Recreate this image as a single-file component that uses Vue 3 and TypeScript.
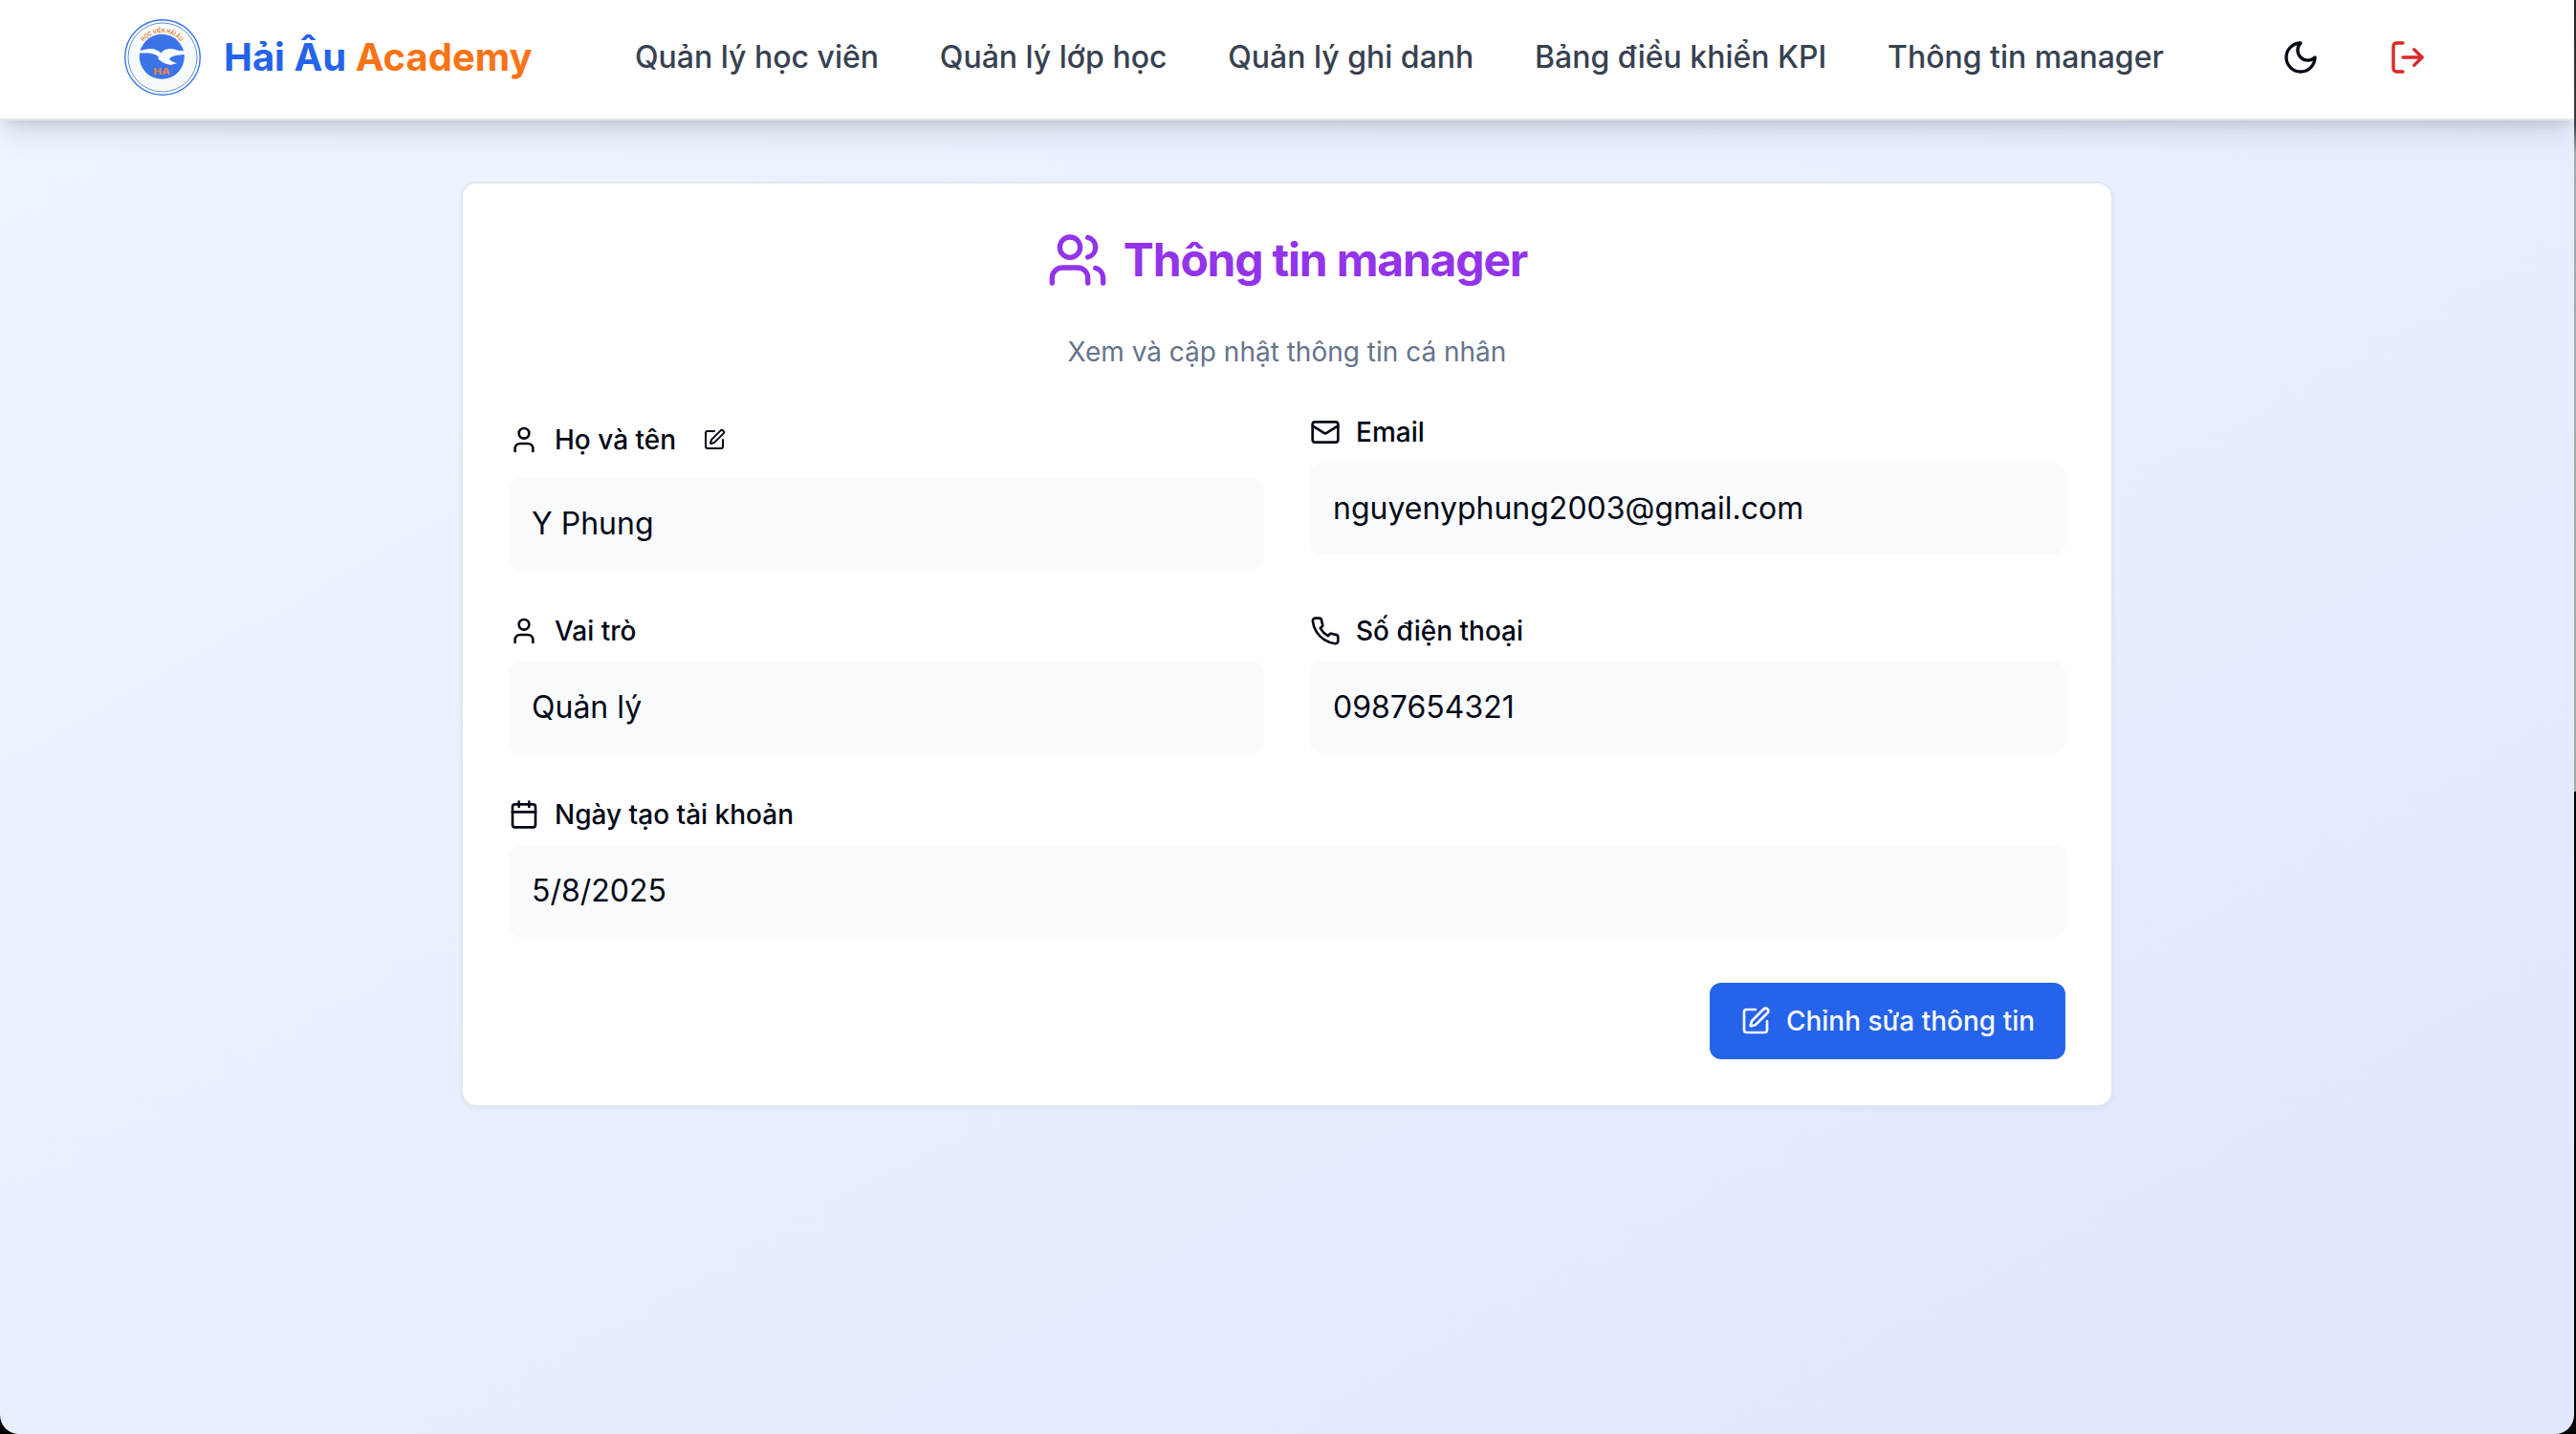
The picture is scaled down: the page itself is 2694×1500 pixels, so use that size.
<script setup lang="ts">
interface Shape { tag: string; [attr: string]: string | number }

const icons: Record<string, Shape[]> = {
  moon: [{ tag: 'path', d: 'M12 3a6 6 0 0 0 9 9 9 9 0 1 1-9-9Z' }],
  logout: [
    { tag: 'path', d: 'M9 21H5a2 2 0 0 1-2-2V5a2 2 0 0 1 2-2h4' },
    { tag: 'path', d: 'm16 17 5-5-5-5' },
    { tag: 'path', d: 'M21 12H9' },
  ],
  users: [
    { tag: 'path', d: 'M16 21v-2a4 4 0 0 0-4-4H6a4 4 0 0 0-4 4v2' },
    { tag: 'circle', cx: 9, cy: 7, r: 4 },
    { tag: 'path', d: 'M22 21v-2a4 4 0 0 0-3-3.87' },
    { tag: 'path', d: 'M16 3.13a4 4 0 0 1 0 7.75' },
  ],
  user: [
    { tag: 'path', d: 'M19 21v-2a4 4 0 0 0-4-4H9a4 4 0 0 0-4 4v2' },
    { tag: 'circle', cx: 12, cy: 7, r: 4 },
  ],
  mail: [
    { tag: 'rect', width: 20, height: 16, x: 2, y: 4, rx: 2 },
    { tag: 'path', d: 'm22 7-8.97 5.7a1.94 1.94 0 0 1-2.06 0L2 7' },
  ],
  phone: [
    { tag: 'path', d: 'M22 16.92v3a2 2 0 0 1-2.18 2 19.79 19.79 0 0 1-8.63-3.07 19.5 19.5 0 0 1-6-6 19.79 19.79 0 0 1-3.07-8.67A2 2 0 0 1 4.11 2h3a2 2 0 0 1 2 1.72 12.84 12.84 0 0 0 .7 2.81 2 2 0 0 1-.45 2.11L8.09 9.91a16 16 0 0 0 6 6l1.27-1.27a2 2 0 0 1 2.11-.45 12.84 12.84 0 0 0 2.81.7A2 2 0 0 1 22 16.92z' },
  ],
  calendar: [
    { tag: 'path', d: 'M8 2v4' },
    { tag: 'path', d: 'M16 2v4' },
    { tag: 'rect', width: 18, height: 18, x: 3, y: 4, rx: 2 },
    { tag: 'path', d: 'M3 10h18' },
  ],
  edit: [
    { tag: 'path', d: 'M12 3H5a2 2 0 0 0-2 2v14a2 2 0 0 0 2 2h14a2 2 0 0 0 2-2v-7' },
    { tag: 'path', d: 'M18.375 2.625a1 1 0 0 1 3 3l-9.013 9.014a2 2 0 0 1-.853.505l-2.873.84a.5.5 0 0 1-.62-.62l.84-2.873a2 2 0 0 1 .506-.852z' },
  ],
}

function attrs(shape: Shape) {
  const { tag, ...rest } = shape
  return rest
}

const navItems: string[] = [
  'Quản lý học viên',
  'Quản lý lớp học',
  'Quản lý ghi danh',
  'Bảng điều khiển KPI',
  'Thông tin manager',
]

interface Field { icon: string; label: string; value: string; editable?: boolean; wide?: boolean }

const fields: Field[] = [
  { icon: 'user', label: 'Họ và tên', value: 'Y Phung', editable: true },
  { icon: 'mail', label: 'Email', value: 'nguyenyphung2003@gmail.com' },
  { icon: 'user', label: 'Vai trò', value: 'Quản lý' },
  { icon: 'phone', label: 'Số điện thoại', value: '0987654321' },
  { icon: 'calendar', label: 'Ngày tạo tài khoản', value: '5/8/2025', wide: true },
]
</script>

<template>
  <div class="screen">
    <div class="page">
      <header class="topbar">
        <a class="brand">
          <svg class="logo" viewBox="0 0 80 80">
            <defs>
              <path id="logo-arc" d="M14.300 39.500A25.200 25.200 0 0 1 64.700 39.500" />
            </defs>
            <circle cx="40" cy="40" r="39.3" fill="#f6fafb" stroke="#3b78ea" stroke-width="1.4" />
            <circle cx="40" cy="40" r="36" fill="none" stroke="#5f86cc" stroke-width="0.9" />
            <circle cx="39.3" cy="39.3" r="23.5" fill="#3a74e8" />
            <text class="logo-ring"><textPath href="#logo-arc" startOffset="50%" text-anchor="middle" textLength="44" lengthAdjust="spacingAndGlyphs">HỌC VIỆN HẢI ÂU</textPath></text>
            <path fill="#f8fbff" d="M8 31.500C12 34.500 17 33 22 31.800C29 30 34 31.500 38.500 35.500C41 31.500 46 30.500 51 31.300C58 33 65 35.500 70 30C69 35.500 65 37 60 37.200C54 37.500 49.500 38.500 47 41.500C48.500 44 52 45.500 55.500 46L48.500 48C44 47.500 40 45.500 37 43C35.500 42 34.500 41 36 40C34 37 29 35.800 23 35.600C17 35.500 11 36 8 31.500Z" />
            <text class="logo-mark" x="39" y="58" text-anchor="middle" textLength="17.500" lengthAdjust="spacingAndGlyphs">HA</text>
          </svg>
          <span class="brand-name">Hải Âu <span class="brand-accent">Academy</span></span>
        </a>
        <nav class="nav">
          <a v-for="item in navItems" :key="item">{{ item }}</a>
        </nav>
        <div class="actions">
          <button class="icon-button" aria-label="Theme">
            <svg class="icon" viewBox="0 0 24 24"><component :is="s.tag" v-for="(s, i) in icons.moon" :key="i" v-bind="attrs(s)" /></svg>
          </button>
          <button class="icon-button danger" aria-label="Logout">
            <svg class="icon" viewBox="0 0 24 24"><component :is="s.tag" v-for="(s, i) in icons.logout" :key="i" v-bind="attrs(s)" /></svg>
          </button>
        </div>
      </header>

      <main class="card">
        <h1 class="title">
          <svg class="icon" viewBox="0 0 24 24"><component :is="s.tag" v-for="(s, i) in icons.users" :key="i" v-bind="attrs(s)" /></svg>
          <span>Thông tin manager</span>
        </h1>
        <p class="subtitle">Xem và cập nhật thông tin cá nhân</p>

        <section class="fields">
          <div v-for="field in fields" :key="field.label" class="field" :class="{ wide: field.wide }">
            <div class="label" :class="{ editable: field.editable }">
              <svg class="icon" viewBox="0 0 24 24"><component :is="s.tag" v-for="(s, i) in icons[field.icon]" :key="i" v-bind="attrs(s)" /></svg>
              <span>{{ field.label }}</span>
              <button v-if="field.editable" class="edit" aria-label="Edit">
                <svg class="icon" viewBox="0 0 24 24"><component :is="s.tag" v-for="(s, i) in icons.edit" :key="i" v-bind="attrs(s)" /></svg>
              </button>
            </div>
            <div class="value">{{ field.value }}</div>
          </div>
        </section>

        <footer class="footer">
          <button class="primary">
            <svg class="icon" viewBox="0 0 24 24"><component :is="s.tag" v-for="(s, i) in icons.edit" :key="i" v-bind="attrs(s)" /></svg>
            <span>Chỉnh sửa thông tin</span>
          </button>
        </footer>
      </main>
    </div>
  </div>
</template>

<style>
body {
  margin: 0;
  background: #000;
}
</style>

<style scoped>
.screen {
  box-sizing: border-box;
  width: 2694px;
  height: 1500px;
  padding-right: 2px;
  overflow: hidden;
  background: linear-gradient(#1c2428 0, #39413f 130px, #a3aaa5 160px, #a3aaa5 828px, #000 828px);
  font-family: Inter, "Noto Sans", sans-serif;
  color: #020817;
}
.page {
  height: 1500px;
  overflow: hidden;
  border-radius: 0 0 20px 20px;
  background: linear-gradient(to bottom right, #eff6ff, #e0e7ff);
  box-shadow: 0 20px 0 #000;
}
.topbar {
  box-sizing: border-box;
  height: 126px;
  padding: 20px 134px 24px 130px;
  display: flex;
  align-items: center;
  background: #fff;
  border-bottom: 2px solid #e5e7eb;
  box-shadow: 0 20px 30px -6px rgba(0, 0, 0, 0.1), 0 8px 12px -4px rgba(0, 0, 0, 0.1);
}
.brand {
  display: flex;
  align-items: center;
  gap: 24px;
  width: 534px;
}
.logo {
  width: 80px;
  height: 80px;
}
.logo-ring {
  font-size: 6.6px;
  font-weight: 700;
  fill: #e08a3c;
}
.logo-mark {
  font-size: 8.5px;
  font-weight: 800;
  fill: #e5844a;
}
.brand-name {
  font-size: 40px;
  line-height: 56px;
  font-weight: 700;
  color: #2563eb;
  white-space: nowrap;
}
.brand-accent {
  color: #f97316;
}
.nav {
  display: flex;
  gap: 63.7px;
  font-size: 32px;
  line-height: 48px;
  font-weight: 500;
  color: #374151;
  white-space: nowrap;
}
.actions {
  display: flex;
  gap: 32px;
  margin-left: auto;
}
button {
  border: 0;
  padding: 0;
  font: inherit;
  color: inherit;
  background: none;
}
.icon {
  display: block;
  flex: none;
  width: 32px;
  height: 32px;
  fill: none;
  stroke: currentColor;
  stroke-width: 2;
  stroke-linecap: round;
  stroke-linejoin: round;
}
.icon-button {
  width: 80px;
  height: 80px;
  display: flex;
  align-items: center;
  justify-content: center;
}
.icon-button .icon {
  width: 40px;
  height: 40px;
}
.danger {
  color: #dc2626;
}
.card {
  box-sizing: border-box;
  width: 1728px;
  height: 968px;
  margin: 64px auto 0;
  padding: 48px;
  border: 2px solid #e2e8f0;
  border-radius: 16px;
  background: #fff;
  background-clip: padding-box;
  box-shadow: 0 2px 4px rgba(0, 0, 0, 0.05);
}
.title {
  display: flex;
  justify-content: center;
  align-items: center;
  gap: 16px;
  height: 64px;
  margin: 0 0 44px;
  font-size: 48px;
  line-height: 64px;
  font-weight: 700;
  letter-spacing: -0.025em;
  color: #9333ea;
}
.title .icon {
  width: 64px;
  height: 64px;
}
.subtitle {
  margin: 0 0 48px;
  text-align: center;
  font-size: 28px;
  line-height: 40px;
  color: #64748b;
}
.fields {
  display: grid;
  grid-template-columns: 1fr 1fr;
  align-items: start;
  gap: 48px;
}
.wide {
  grid-column: span 2;
}
.label {
  display: flex;
  align-items: center;
  gap: 16px;
  height: 32px;
  margin-bottom: 16px;
  font-size: 28px;
  line-height: 28px;
  font-weight: 500;
}
.label.editable {
  height: 48px;
}
.edit {
  width: 48px;
  height: 48px;
  display: flex;
  align-items: center;
  justify-content: center;
}
.edit .icon {
  width: 24px;
  height: 24px;
}
.value {
  padding: 24px;
  border-radius: 12px;
  background: #f9fafb;
  font-size: 32px;
  line-height: 48px;
}
.footer {
  display: flex;
  justify-content: flex-end;
  margin-top: 48px;
}
.primary {
  box-sizing: border-box;
  width: 372px;
  height: 80px;
  display: flex;
  align-items: center;
  justify-content: center;
  gap: 16px;
  border-radius: 12px;
  background: #2563eb;
  color: #f8fafc;
  font-size: 28px;
  line-height: 40px;
  font-weight: 500;
  white-space: nowrap;
}
</style>
